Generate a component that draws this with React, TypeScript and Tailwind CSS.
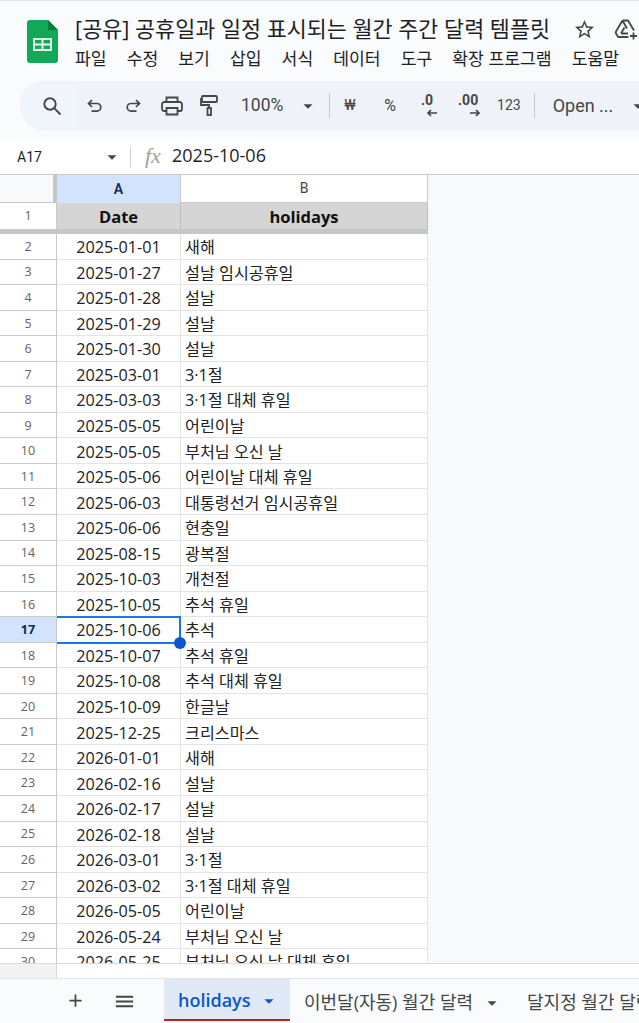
import React from 'react';
import { MdArrowDropDown, MdAdd, MdMenu, MdStarBorder } from 'react-icons/md';

const FONT = 'font-["Open_Sans","Noto_Sans_CJK_KR",sans-serif]';

const rows: [string, string][] = [
  ['2025-01-01', '새해'],
  ['2025-01-27', '설날 임시공휴일'],
  ['2025-01-28', '설날'],
  ['2025-01-29', '설날'],
  ['2025-01-30', '설날'],
  ['2025-03-01', '3·1절'],
  ['2025-03-03', '3·1절 대체 휴일'],
  ['2025-05-05', '어린이날'],
  ['2025-05-05', '부처님 오신 날'],
  ['2025-05-06', '어린이날 대체 휴일'],
  ['2025-06-03', '대통령선거 임시공휴일'],
  ['2025-06-06', '현충일'],
  ['2025-08-15', '광복절'],
  ['2025-10-03', '개천절'],
  ['2025-10-05', '추석 휴일'],
  ['2025-10-06', '추석'],
  ['2025-10-07', '추석 휴일'],
  ['2025-10-08', '추석 대체 휴일'],
  ['2025-10-09', '한글날'],
  ['2025-12-25', '크리스마스'],
  ['2026-01-01', '새해'],
  ['2026-02-16', '설날'],
  ['2026-02-17', '설날'],
  ['2026-02-18', '설날'],
  ['2026-03-01', '3·1절'],
  ['2026-03-02', '3·1절 대체 휴일'],
  ['2026-05-05', '어린이날'],
  ['2026-05-24', '부처님 오신 날'],
  ['2026-05-25', '부처님 오신 날 대체 휴일'],
];

const menus = ['파일', '수정', '보기', '삽입', '서식', '데이터', '도구', '확장 프로그램', '도움말'];

function SheetsLogo() {
  return (
    <svg width="31" height="43" viewBox="0 0 31 43" className="shrink-0">
      <path d="M3 0h18l10 10v30a3 3 0 0 1-3 3H3a3 3 0 0 1-3-3V3a3 3 0 0 1 3-3z" fill="#0fa958" />
      <path d="M21 0l10 10H21z" fill="#0a7a3f" />
      <path d="M6 18h19v13H6z M8 20v3.5h6.5V20z M16.5 20v3.5H23V20z M8 25.5V29h6.5v-3.5z M16.5 25.5V29H23v-3.5z" fill="#e8f5ec" fillRule="evenodd" />
    </svg>
  );
}

function DriveAdd() {
  return (
    <svg width="26" height="24" viewBox="0 0 26 24" fill="none" stroke="#444746" strokeWidth="1.8" className="shrink-0">
      <path d="M9.5 3.5h5.5l6 10M9.5 3.5L3 14.5a2 2 0 0 0 0 2l1.5 2.5a1.5 1.5 0 0 0 1.3 1h9.7M9.5 3.5l4.5 8M8 16.5h7M8 16.5l3.5-6" strokeLinejoin="round" />
      <path d="M20.5 15.5v7M17 19h7" />
    </svg>
  );
}

// toolbar glyphs, thin outlined like the sheets ones
function UndoIcon({ flip }: { flip?: boolean }) {
  return (
    <svg width="18" height="18" viewBox="0 0 18 18" fill="none" stroke="#444746" strokeWidth="1.7" className={`shrink-0 ${flip ? '-scale-x-100' : ''}`}>
      <path d="M6 3L2.5 6.5 6 10M2.5 6.5H11a3.8 3.8 0 0 1 0 7.6H5.5" />
    </svg>
  );
}

function SearchIcon() {
  return (
    <svg width="20" height="20" viewBox="0 0 20 20" fill="none" stroke="#444746" strokeWidth="1.9" className="shrink-0">
      <circle cx="8" cy="8" r="5.7" />
      <path d="M12.2 12.2L18.5 18.5" />
    </svg>
  );
}

function PrintIcon() {
  return (
    <svg width="22" height="20" viewBox="0 0 22 20" fill="none" stroke="#444746" strokeWidth="1.8" className="shrink-0">
      <path d="M5.5 6V1.5h11V6" />
      <path d="M5.5 15H3a2 2 0 0 1-2-2V8.5A2.5 2.5 0 0 1 3.5 6h15A2.5 2.5 0 0 1 21 8.5V13a2 2 0 0 1-2 2h-2.5" />
      <path d="M5.5 12h11v6.5h-11z" />
    </svg>
  );
}

function PaintIcon() {
  return (
    <svg width="18" height="21" viewBox="0 0 18 21" fill="none" stroke="#444746" strokeWidth="1.8" className="shrink-0">
      <rect x="2" y="1" width="15" height="6" rx="1" />
      <path d="M2 4H1v6h8v3" />
      <rect x="7.5" y="13" width="3.5" height="7" />
    </svg>
  );
}

function Divider() {
  return <div className="w-px h-[25px] bg-[#c7c7c7] shrink-0" />;
}

function DecimalIcon({ label, dir }: { label: string; dir: 'left' | 'right' }) {
  return (
    <div className="relative w-[26px] h-[26px] shrink-0 text-[#444746]">
      <span className={`absolute top-[-3px] ${dir === 'left' ? 'left-[3px]' : 'left-0'} text-[14px] font-bold font-["Roboto",sans-serif]`}>{label}</span>
      <svg width="14" height="8" viewBox="0 0 14 8" className={`absolute top-[16px] ${dir === 'left' ? 'left-[8px]' : 'left-[11px]'}`} fill="none" stroke="#444746" strokeWidth="1.7">
        {dir === 'left' ? <path d="M11 4H2M5 1L2 4l3 3" /> : <path d="M1 4h9M7 1l3 3-3 3" />}
      </svg>
    </div>
  );
}

function Toolbar() {
  return (
    <div className="ml-5 h-[49px] w-[640px] shrink-0 rounded-l-[24px] bg-[#eff3f9] flex items-center text-[#444746]">
      <div className="w-[58px] h-[42px] rounded-l-[21px] bg-[#f0f5fc] flex items-center shrink-0 pl-[22px]">
        <SearchIcon />
      </div>
      <div className="ml-[8px]"><UndoIcon /></div>
      <div className="ml-[20px]"><UndoIcon flip /></div>
      <div className="ml-[19px]"><PrintIcon /></div>
      <div className="ml-[17px]"><PaintIcon /></div>
      <span className='ml-[23px] text-[17.5px] font-["Roboto",sans-serif] shrink-0'>100%</span>
      <MdArrowDropDown size={22} className="ml-[14px] shrink-0" />
      <div className="ml-[10px]"><Divider /></div>
      <span className='ml-[14px] w-[16px] text-[15.5px] font-["Roboto",sans-serif] shrink-0'>₩</span>
      <span className='ml-[24px] text-[16px] font-["Roboto",sans-serif] shrink-0'>%</span>
      <div className="ml-[22px]"><DecimalIcon label=".0" dir="left" /></div>
      <div className="ml-[14px]"><DecimalIcon label=".00" dir="right" /></div>
      <span className='ml-[13px] text-[14px] font-["Roboto",sans-serif] shrink-0'>123</span>
      <div className="ml-[13px]"><Divider /></div>
      <span className='ml-[18px] text-[18px] font-["Roboto",sans-serif] whitespace-nowrap shrink-0'>Open ...</span>
      <MdArrowDropDown size={22} className="ml-[14px] shrink-0" />
    </div>
  );
}

function Row({ n, date, name }: { n: number; date: string; name: string }) {
  const active = n === 17;
  return (
    <div className="flex h-[25.55px] shrink-0 text-[16.2px] text-[#222]">
      <div className={`w-[57px] shrink-0 border-r border-b border-[#c9c9c9] flex items-center justify-center pt-[2px] text-[12.5px] ${active ? 'bg-[#d3e3fd] font-bold text-[#0b2b55]' : 'bg-white text-[#5f6368]'}`}>
        {n}
      </div>
      <div className="relative w-[124px] shrink-0 bg-white border-r border-b border-[#e2e3e3] flex items-center justify-center pt-[2px]">
        {date}
        {active && (
          <div className="absolute z-10 left-0 -top-px right-[-1px] bottom-[-2px] border-t-2 border-r-2 border-b-2 border-[#1a73e8]">
            <div className="absolute right-[-7px] bottom-[-7px] w-[12px] h-[12px] rounded-full bg-[#0b57d0]" />
          </div>
        )}
      </div>
      <div className="w-[247px] shrink-0 bg-white border-r border-b border-[#e2e3e3] flex items-center pt-[2px] pl-[4px] whitespace-nowrap">
        {name}
      </div>
    </div>
  );
}

function Grid() {
  return (
    <div className="h-[789px] shrink-0 bg-[#f8f9fa] overflow-hidden flex flex-col border-t border-[#c9c9c9]">
      <div className="flex h-[28px] shrink-0 text-[14px] font-['Roboto',sans-serif]">
        <div className="w-[57px] shrink-0 bg-[#f8f9fa] border-r-[4px] border-b border-[#c4c7c5]" />
        <div className="w-[124px] shrink-0 bg-[#d3e3fd] border-r border-[#c9c9c9] flex items-center justify-center font-semibold text-[#0b2b55]">A</div>
        <div className="w-[247px] shrink-0 bg-white border-r border-b border-[#c9c9c9] flex items-center justify-center text-[#444746]">B</div>
      </div>
      <div className="flex h-[26px] shrink-0">
        <div className="w-[57px] shrink-0 bg-white border-r border-[#c9c9c9] flex items-center justify-center text-[12.5px] text-[#5f6368]">1</div>
        <div className="w-[124px] shrink-0 bg-[#d5d5d5] border-r border-[#bdbdbd] flex items-center justify-center pt-[2px] text-[16.5px] font-bold text-[#111]">Date</div>
        <div className="w-[247px] shrink-0 bg-[#d5d5d5] border-r border-[#bdbdbd] flex items-center justify-center pt-[2px] text-[16.5px] font-bold text-[#111]">holidays</div>
      </div>
      <div className="h-[5px] w-[428px] shrink-0 bg-[#c4c7c5]" />
      {rows.map((r, i) => (
        <Row key={i} n={i + 2} date={r[0]} name={r[1]} />
      ))}
    </div>
  );
}

function SheetTabs() {
  return (
    <div className="flex h-[43px] shrink-0 bg-[#f9fbfd] border-t border-[#e3e3e3] overflow-hidden whitespace-nowrap text-[18px] text-[#444746]">
      <MdAdd size={21} className="ml-[65px] mt-[11px] shrink-0" />
      <MdMenu size={23} className="ml-[27px] mt-[11px] shrink-0" />
      <div className="ml-[28px] w-[126px] shrink-0 bg-[#e1e9f7] border-b-[2px] border-[#b3261e] flex items-center pl-[14px] pt-[3px] text-[18px] font-semibold text-[#0b57d0]">
        holidays
        <MdArrowDropDown size={22} className="ml-[7px] shrink-0" />
      </div>
      <div className="ml-[14px] shrink-0 flex items-center pt-[5px]">
        이번달(자동) 월간 달력
        <MdArrowDropDown size={22} className="ml-[8px]" />
      </div>
      <div className="ml-[24px] shrink-0 flex items-center pt-[5px]">달지정 월간 달력</div>
    </div>
  );
}

export default function App() {
  return (
    <div className={`w-[639px] h-[1023px] overflow-hidden flex flex-col bg-[#f9fbfd] ${FONT}`}>
      <div className="h-[1px] shrink-0 bg-[#e2e2e2]" />
      {/* Title and menus */}
      <div className="flex h-[80px] shrink-0 pl-[27px] pt-[19px] overflow-hidden">
        <SheetsLogo />
        <div className="ml-[17px] shrink-0 flex flex-col">
          <div className="flex items-center h-[24px] mt-[-3px]">
            <span className="text-[21.8px] leading-[24px] text-[#1f1f1f] whitespace-nowrap">[공유] 공휴일과 일정 표시되는 월간 주간 달력 템플릿</span>
            <MdStarBorder size={23} className="ml-[23px] text-[#444746] shrink-0" />
            <div className="ml-[17px]"><DriveAdd /></div>
          </div>
          <div className="flex gap-[20px] mt-[5px] text-[17.2px] text-[#1f1f1f] whitespace-nowrap">
            {menus.map((m) => (
              <span key={m}>{m}</span>
            ))}
          </div>
        </div>
      </div>
      <Toolbar />
      {/* Name box and formula */}
      <div className="h-[10px] shrink-0" />
      <div className="flex items-center h-[34px] shrink-0 bg-white text-[#1f1f1f]">
        <span className='ml-[17px] w-[84px] text-[14px] font-["Roboto",sans-serif]'>A17</span>
        <MdArrowDropDown size={22} className="text-[#444746] shrink-0" />
        <div className="ml-[7px] w-px h-[20px] bg-[#d0d0d0] shrink-0" />
        <span className="ml-[14px] w-[27px] pb-[3px] text-[22px] italic font-['Liberation_Serif',serif] text-[#a0a0a0]">fx</span>
        <span className="pb-[3px] text-[18px]">2025-10-06</span>
      </div>
      <Grid />
      {/* Horizontal scrollbar track */}
      <div className="flex h-[15px] shrink-0 bg-white border-t border-[#dadada]">
        <div className="w-[57px] bg-[#f3f3f3] border-r border-[#dadada]" />
      </div>
      <SheetTabs />
    </div>
  );
}
